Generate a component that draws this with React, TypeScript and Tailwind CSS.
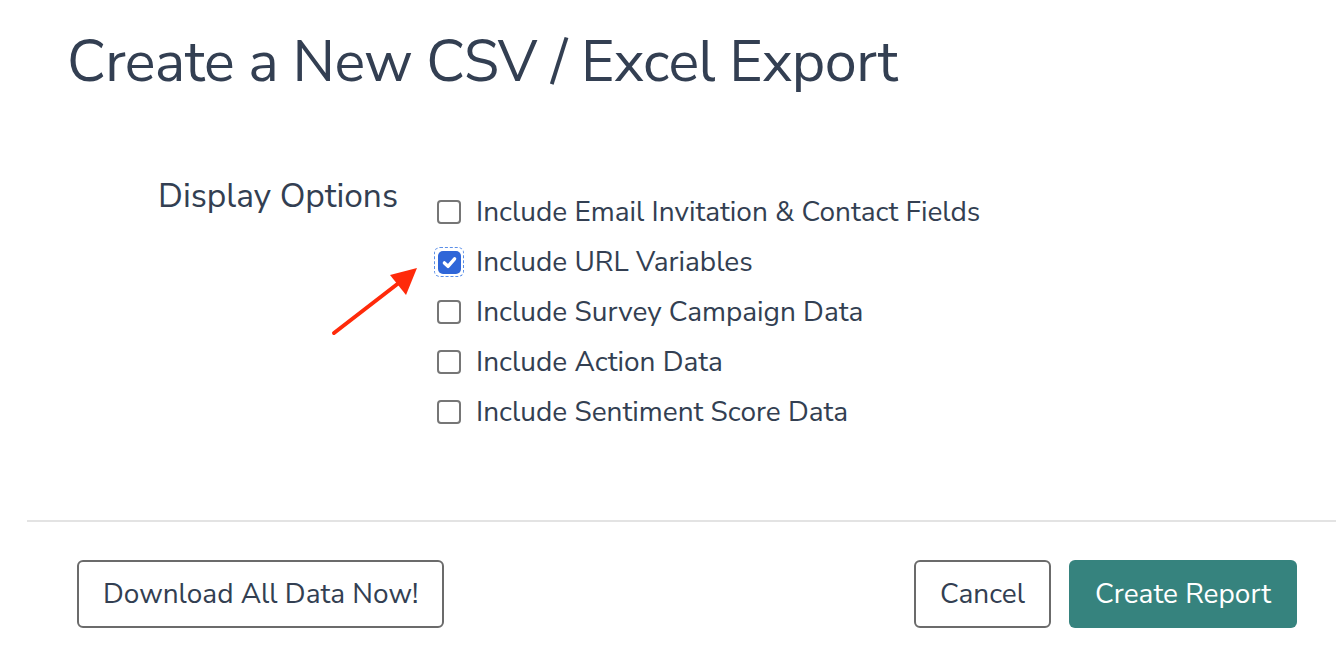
import React from "react";

const font = { fontFamily: '"Nunito Sans", Lato, "Open Sans", sans-serif' };

function Box({ checked }: { checked?: boolean }) {
  if (checked) {
    return (
      <span className="relative flex h-[24px] w-[24px] shrink-0 items-center justify-center">
        <span className="absolute -inset-[3px] rounded-[6px] border border-dashed border-[#5b8fe8]" />
        <span className="flex h-[23px] w-[23px] items-center justify-center rounded-[5px] bg-[#2f66d8]">
          <svg width="17" height="17" viewBox="0 0 16 16">
            <path d="M3.2 8.4 L6.6 11.6 L12.8 4.6" fill="none" stroke="#fff" strokeWidth="3.2" strokeLinecap="round" strokeLinejoin="round" />
          </svg>
        </span>
      </span>
    );
  }
  return <span className="h-[24px] w-[24px] shrink-0 rounded-[4px] border-2 border-[#767676] bg-white" />;
}

const options = [
  "Include Email Invitation & Contact Fields",
  "Include URL Variables",
  "Include Survey Campaign Data",
  "Include Action Data",
  "Include Sentiment Score Data",
];

export default function App() {
  return (
    <div className="relative h-[653px] w-[1336px] overflow-hidden bg-white text-[#333f52]" style={font}>
      <h1 className="pl-[67px] pt-[22px] text-[57.5px] font-normal leading-[80px] tracking-[-0.55px]">
        Create a New CSV / Excel Export
      </h1>
      <div className="mt-[76px] flex">
        <div className="w-[400px] pr-[2px] text-right text-[33.5px] leading-[36px]">Display Options</div>
        <div className="ml-[37px] mt-[9px] flex flex-col">
          {options.map((o, i) => (
            <label key={o} className="flex h-[50px] items-center gap-[15px] text-[28px]">
              <Box checked={i === 1} />
              <span>{o}</span>
            </label>
          ))}
        </div>
      </div>
      <div className="ml-[27px] mt-[83px] h-[2px] bg-[#e3e3e3]" />
      <div className="mt-[38px] flex items-center pl-[77px] pr-[39px]">
        <button className="h-[68px] rounded-[6px] border-2 border-[#6b6b6b] px-[24px] text-[28px]">
          Download All Data Now!
        </button>
        <div className="flex-1" />
        <button className="h-[68px] w-[137px] rounded-[6px] border-2 border-[#6b6b6b] text-[28px]">
          Cancel
        </button>
        <button className="ml-[18px] h-[68px] w-[228px] rounded-[6px] bg-[#36837e] text-[28px] text-white">
          Create Report
        </button>
      </div>
      <svg className="absolute left-[330px] top-[262px]" width="92" height="76" viewBox="0 0 92 76">
        <line x1="4" y1="71" x2="70" y2="20" stroke="#ff2a0a" strokeWidth="4" strokeLinecap="round" />
        <polygon points="87,6 60,13 76,33" fill="#ff2a0a" />
      </svg>
    </div>
  );
}
